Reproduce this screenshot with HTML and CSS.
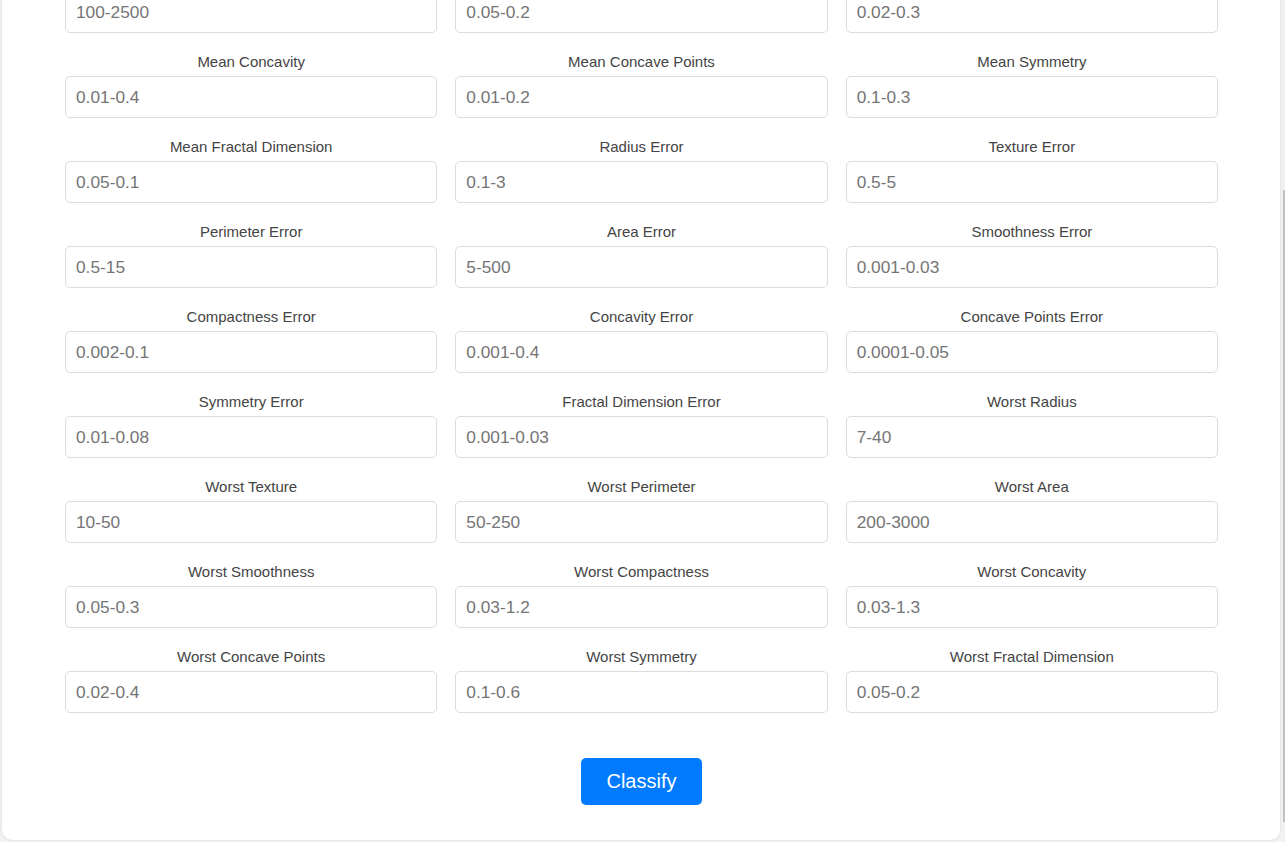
FILE: index.html
```html
<!DOCTYPE html>
<html lang="en">
<head>
<meta charset="utf-8">
<title>Breast Cancer Classifier</title>
<link rel="stylesheet" href="styles.css">
</head>
<body>
<div class="card">
  <h1 class="title">Breast Cancer Classifier</h1>
  <form class="form">
    <div class="grid">
      <div class="field"><label class="label">Mean Radius</label><input class="input" type="text" placeholder="6-30"></div>
      <div class="field"><label class="label">Mean Texture</label><input class="input" type="text" placeholder="9-40"></div>
      <div class="field"><label class="label">Mean Perimeter</label><input class="input" type="text" placeholder="40-200"></div>
      <div class="field"><label class="label">Mean Area</label><input class="input" type="text" placeholder="100-2500"></div>
      <div class="field"><label class="label">Mean Smoothness</label><input class="input" type="text" placeholder="0.05-0.2"></div>
      <div class="field"><label class="label">Mean Compactness</label><input class="input" type="text" placeholder="0.02-0.3"></div>
      <div class="field"><label class="label">Mean Concavity</label><input class="input" type="text" placeholder="0.01-0.4"></div>
      <div class="field"><label class="label">Mean Concave Points</label><input class="input" type="text" placeholder="0.01-0.2"></div>
      <div class="field"><label class="label">Mean Symmetry</label><input class="input" type="text" placeholder="0.1-0.3"></div>
      <div class="field"><label class="label">Mean Fractal Dimension</label><input class="input" type="text" placeholder="0.05-0.1"></div>
      <div class="field"><label class="label">Radius Error</label><input class="input" type="text" placeholder="0.1-3"></div>
      <div class="field"><label class="label">Texture Error</label><input class="input" type="text" placeholder="0.5-5"></div>
      <div class="field"><label class="label">Perimeter Error</label><input class="input" type="text" placeholder="0.5-15"></div>
      <div class="field"><label class="label">Area Error</label><input class="input" type="text" placeholder="5-500"></div>
      <div class="field"><label class="label">Smoothness Error</label><input class="input" type="text" placeholder="0.001-0.03"></div>
      <div class="field"><label class="label">Compactness Error</label><input class="input" type="text" placeholder="0.002-0.1"></div>
      <div class="field"><label class="label">Concavity Error</label><input class="input" type="text" placeholder="0.001-0.4"></div>
      <div class="field"><label class="label">Concave Points Error</label><input class="input" type="text" placeholder="0.0001-0.05"></div>
      <div class="field"><label class="label">Symmetry Error</label><input class="input" type="text" placeholder="0.01-0.08"></div>
      <div class="field"><label class="label">Fractal Dimension Error</label><input class="input" type="text" placeholder="0.001-0.03"></div>
      <div class="field"><label class="label">Worst Radius</label><input class="input" type="text" placeholder="7-40"></div>
      <div class="field"><label class="label">Worst Texture</label><input class="input" type="text" placeholder="10-50"></div>
      <div class="field"><label class="label">Worst Perimeter</label><input class="input" type="text" placeholder="50-250"></div>
      <div class="field"><label class="label">Worst Area</label><input class="input" type="text" placeholder="200-3000"></div>
      <div class="field"><label class="label">Worst Smoothness</label><input class="input" type="text" placeholder="0.05-0.3"></div>
      <div class="field"><label class="label">Worst Compactness</label><input class="input" type="text" placeholder="0.03-1.2"></div>
      <div class="field"><label class="label">Worst Concavity</label><input class="input" type="text" placeholder="0.03-1.3"></div>
      <div class="field"><label class="label">Worst Concave Points</label><input class="input" type="text" placeholder="0.02-0.4"></div>
      <div class="field"><label class="label">Worst Symmetry</label><input class="input" type="text" placeholder="0.1-0.6"></div>
      <div class="field"><label class="label">Worst Fractal Dimension</label><input class="input" type="text" placeholder="0.05-0.2"></div>
    </div>
    <div class="actions"><button class="button" type="button">Classify</button></div>
  </form>
</div>
<div class="scrollbar"><div class="scrollbar-thumb"></div></div>
<script src="script.js"></script>
</body>
</html>
```
FILE: styles.css
```css
html {
  background: #f4f4f4;
}
body {
  margin: 0;
  padding: 2px 5px 2px 2px;
  background: #f4f4f4;
  font-family: "Liberation Sans", Arial, sans-serif;
}
.card {
  background: #ffffff;
  border-radius: 10px;
  box-shadow: 0 0 4px rgba(0, 0, 0, 0.12);
  padding: 20px 62px 35px 63px;
}
.title {
  margin: 20px 0 35px;
  font-size: 28px;
  line-height: 32px;
  font-weight: bold;
  text-align: center;
  color: #333;
}
.form {
  margin: 0;
}
.grid {
  display: grid;
  grid-template-columns: repeat(3, 1fr);
  column-gap: 18px;
  row-gap: 20px;
}
.field {
  display: flex;
  flex-direction: column;
}
.label {
  display: block;
  font-size: 15px;
  line-height: 17px;
  color: #444;
  text-align: center;
  margin-bottom: 6px;
}
.input {
  box-sizing: border-box;
  width: 100%;
  height: 42px;
  padding: 0 10px;
  border: 1px solid #dcdcdc;
  border-radius: 5px;
  font-family: "Liberation Sans", Arial, sans-serif;
  font-size: 17.3px;
  color: #333;
  background: #fff;
  outline: none;
}
.input::placeholder {
  color: #757575;
}
.actions {
  display: flex;
  justify-content: center;
  margin-top: 45px;
}
.button {
  background: #007bff;
  color: #fff;
  border: none;
  border-radius: 5px;
  padding: 12px 25px;
  font-family: "Liberation Sans", Arial, sans-serif;
  font-size: 20px;
  line-height: 23px;
  cursor: pointer;
}
.scrollbar {
  position: fixed;
  top: 0;
  right: 0;
  width: 4px;
  height: 100%;
  background: #f1f1f1;
}
.scrollbar-thumb {
  position: absolute;
  top: 190px;
  left: 2px;
  width: 2px;
  height: 632px;
  background: #c1c1c1;
}
```
FILE: script.js
```js
window.scrollTo(0, document.documentElement.scrollHeight);
window.addEventListener('load', function () {
  window.scrollTo(0, document.documentElement.scrollHeight);
});
```
